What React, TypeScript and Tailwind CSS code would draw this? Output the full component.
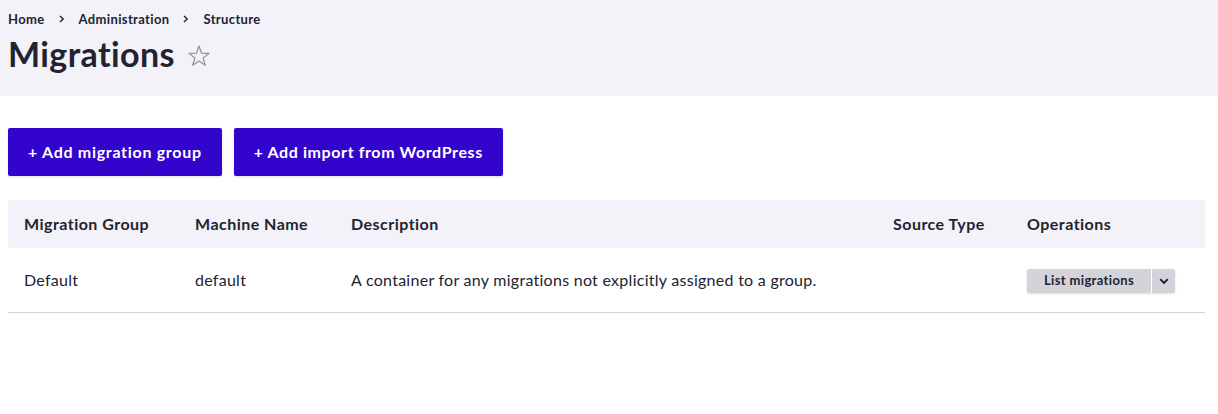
import React from 'react';

const font = { fontFamily: 'Lato, "Noto Sans", sans-serif' };

const Star = () => (
  <svg width="24" height="24" viewBox="0 0 24 24" className="ml-3 mt-1">
    <polygon
      points="12,2 14.6,9.2 22,9.4 16.1,14 18.3,21.3 12,17 5.7,21.3 7.9,14 2,9.4 9.4,9.2"
      fill="none"
      stroke="#8e929c"
      strokeWidth="1.2"
      strokeLinejoin="round"
    />
  </svg>
);

const Chevron = () => (
  <svg width="12" height="12" viewBox="0 0 12 12">
    <path d="M2.2 4.2 L6 8 L9.8 4.2" fill="none" stroke="#1b1d3a" strokeWidth="1.9" />
  </svg>
);

const Sep = () => (
  <svg width="6" height="8" viewBox="0 0 6 8" className="mx-[14px]">
    <path d="M1 1 L4.2 4 L1 7" fill="none" stroke="#222330" strokeWidth="1.4" />
  </svg>
);

const App = () => {
  const crumbs = ['Home', 'Administration', 'Structure'];

  return (
    <div className="min-h-screen bg-white text-[#222330] tracking-[0.27px]" style={font}>
      <div className="h-[96px] bg-[#f3f2f8] px-2 pt-[11px]">
        <nav className="flex items-center text-[13px] font-bold leading-[16px] tracking-[0.36px]">
          {crumbs.map((c, i) => (
            <React.Fragment key={c}>
              {i > 0 && <Sep />}
              <span>{c}</span>
            </React.Fragment>
          ))}
        </nav>
        <div className="mt-[7px] flex items-center">
          <h1 className="text-[34px] font-bold leading-[40px] tracking-[0.4px]">Migrations</h1>
          <Star />
        </div>
      </div>

      <div className="px-2 pt-8">
        <div className="flex gap-3">
          <button className="h-12 rounded-[2px] bg-[#3304cc] px-5 text-[16px] font-bold tracking-[0.7px] text-white shadow-sm">
            + Add migration group
          </button>
          <button className="h-12 rounded-[2px] bg-[#3304cc] px-5 text-[16px] font-bold tracking-[0.6px] text-white shadow-sm">
            + Add import from WordPress
          </button>
        </div>

        <div className="mt-6 w-[1197px] text-[16px]">
          <div className="grid h-12 grid-cols-[171px_156px_542px_134px_194px] items-center bg-[#f3f2f8] font-bold tracking-[0.47px]">
            <div className="pl-4">Migration Group</div>
            <div className="pl-4">Machine Name</div>
            <div className="pl-4">Description</div>
            <div className="pl-4">Source Type</div>
            <div className="pl-4">Operations</div>
          </div>
          <div className="grid h-[65px] grid-cols-[171px_156px_542px_134px_194px] items-center border-b border-[#d3d4d9]">
            <div className="pl-4">Default</div>
            <div className="pl-4">default</div>
            <div className="pl-4">A container for any migrations not explicitly assigned to a group.</div>
            <div className="pl-4"></div>
            <div className="pl-4">
              <div className="inline-flex h-6 items-stretch rounded-[2px] bg-[#d3d4d9] shadow-sm">
                <span className="flex w-[124px] items-center justify-center text-[13px] font-bold tracking-[0.35px]">List migrations</span>
                <span className="w-px bg-white" />
                <span className="flex w-[23px] items-center justify-center">
                  <Chevron />
                </span>
              </div>
            </div>
          </div>
        </div>
      </div>
    </div>
  );
};

export default App;
